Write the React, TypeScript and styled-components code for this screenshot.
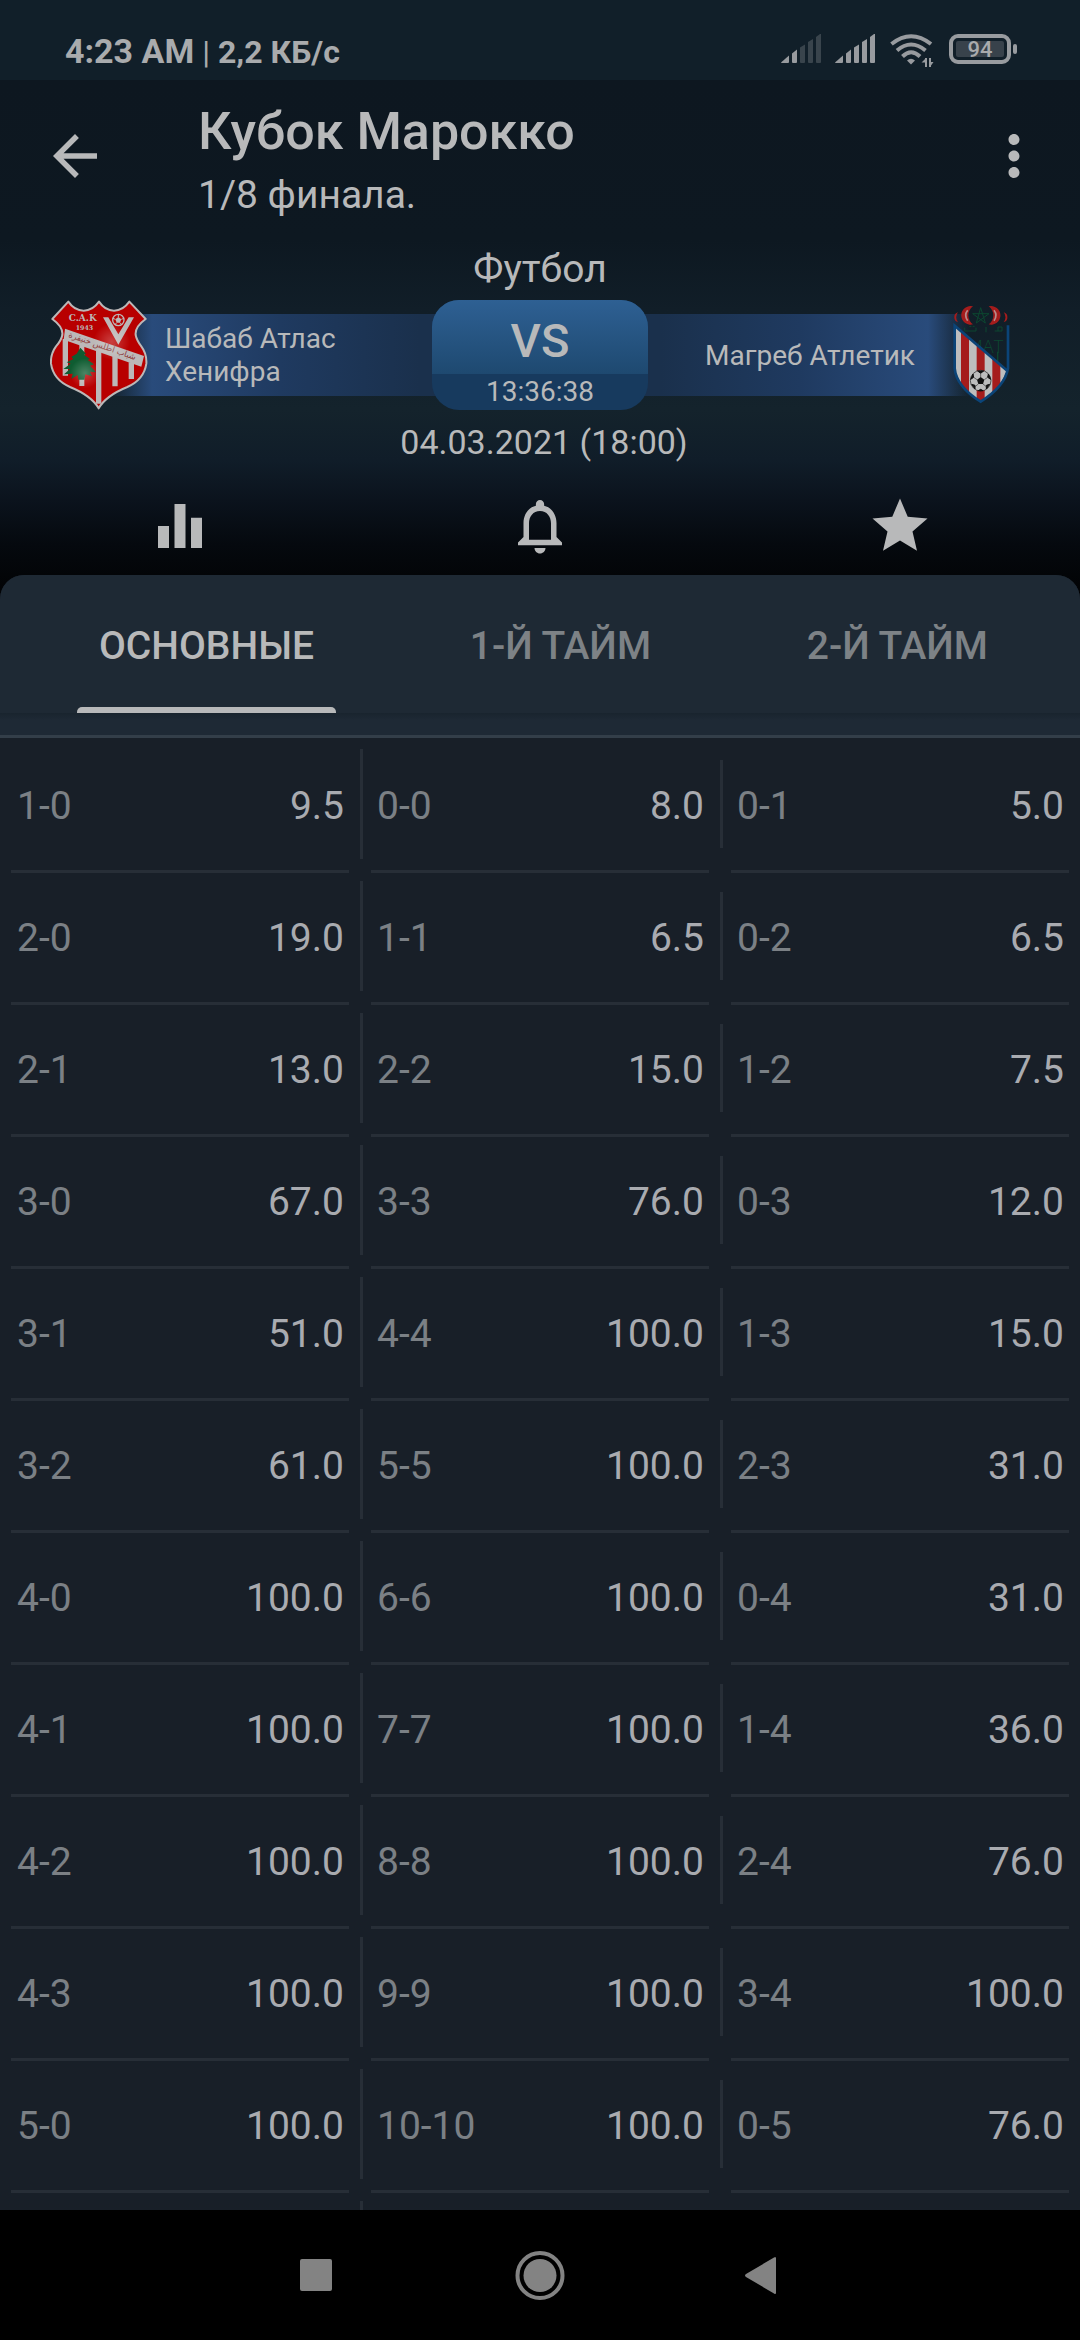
import React, { useState } from "react";
import styled, { createGlobalStyle } from "styled-components";

const GlobalStyle = createGlobalStyle`
  * { box-sizing: border-box; }
  html, body, #root { height: 100%; }
  body {
    margin: 0;
    background: #000;
    color: #b8b9ba;
    font-family: Roboto, "Noto Sans", sans-serif;
  }
  button {
    border: 0;
    padding: 0;
    background: none;
    color: inherit;
    font: inherit;
    cursor: pointer;
  }
`;

const Screen = styled.div`
  display: flex;
  flex-direction: column;
  height: 100vh;
  overflow: hidden;
`;

const Hero = styled.header`
  background: linear-gradient(
    #0d1720 80px,
    #0d1821 240px,
    #111e28 310px,
    #14232c 410px,
    #101d29 460px,
    #0b131d 500px,
    #05090e 545px,
    #020305 590px
  );
  padding-bottom: 40px;
`;

const StatusBar = styled.div`
  display: flex;
  align-items: center;
  height: 80px;
  padding: 22px 63px 0 65px;
  background: #111f29;
  color: #a9abad;
`;

const Clock = styled.div`
  display: flex;
  align-items: baseline;
  gap: 8px;
  flex: 1;
  font-size: 34px;
  line-height: 40px;
  font-weight: 700;
`;

const Speed = styled.span`
  font-size: 32px;
`;

const Bar = styled.span`
  font-size: 32px;
  font-weight: 400;
`;

const Indicators = styled.div`
  display: flex;
  align-items: flex-start;
  gap: 14px;
  height: 34px;
  color: #989b9f;
`;

const Battery = styled.div`
  display: flex;
  align-items: center;
  gap: 2px;
  height: 30px;
  &::after {
    content: "";
    width: 4px;
    height: 10px;
    border-radius: 2px;
    background: currentColor;
  }
`;

const BatteryShell = styled.div`
  width: 62px;
  height: 30px;
  padding: 3px;
  border: 4px solid currentColor;
  border-radius: 9px;
`;

const BatteryLevel = styled.div`
  height: 16px;
  border-radius: 2px;
  background: #38424b;
  color: #a9abad;
  font-size: 22px;
  line-height: 17px;
  font-weight: 500;
  text-align: center;
`;

const AppBar = styled.div`
  display: flex;
  align-items: flex-start;
  gap: 90px;
  padding: 22px 33px 29px 42px;
`;

const IconButton = styled.button`
  display: block;
  height: 66px;
  margin-top: 21px;
  svg { display: block; }
`;

const Titles = styled.div`
  display: flex;
  flex-direction: column;
  gap: 10px;
  flex: 1;
`;

const Title = styled.h1`
  margin: 0;
  font-size: 52px;
  line-height: 60px;
  font-weight: 500;
`;

const Subtitle = styled.p`
  margin: 0;
  font-size: 39px;
  line-height: 46px;
`;

const Sport = styled.div`
  margin-bottom: 9px;
  font-size: 39px;
  line-height: 44px;
  text-align: center;
`;

const Match = styled.div`
  display: grid;
  grid-template-columns: 1fr 216px 1fr;
  height: 110px;
`;

const Team = styled.div<{ $side: "left" | "right" }>`
  display: flex;
  flex-direction: ${(p) => (p.$side === "left" ? "row" : "row-reverse")};
  align-items: center;
  gap: ${(p) => (p.$side === "left" ? 17 : 37)}px;
  padding: ${(p) => (p.$side === "left" ? "0 0 0 50px" : "0 70px 0 0")};
  margin: ${(p) => (p.$side === "left" ? "0 -10px 0 0" : "0 0 0 -10px")};
  background: linear-gradient(
      to ${(p) => (p.$side === "left" ? "right" : "left")},
      transparent 110px,
      #294b7b 152px,
      #1f3a60 280px,
      #1a304c 420px
    )
    center / 100% 82px no-repeat;
  font-size: 28px;
  line-height: 33px;
  svg { flex: none; }
`;

const TeamName = styled.span`
  max-width: 220px;
`;

const Versus = styled.div`
  position: relative;
  z-index: 1;
  display: flex;
  flex-direction: column;
  overflow: hidden;
  border-radius: 27px;
  background: #173a5e;
  text-align: center;
`;

const VersusMark = styled.div`
  height: 77px;
  padding-top: 13px;
  background: linear-gradient(#2e6093, #1e4970);
  font-size: 47px;
  line-height: 56px;
  font-weight: 500;
`;

const Countdown = styled.div`
  font-size: 28px;
  line-height: 36px;
`;

const Kickoff = styled.div`
  margin-top: 12px;
  padding-left: 8px;
  font-size: 34px;
  line-height: 40px;
  text-align: center;
`;

const Actions = styled.div`
  display: grid;
  grid-template-columns: repeat(3, 1fr);
  justify-items: center;
  margin-top: 10px;
`;

const Sheet = styled.main`
  display: flex;
  flex-direction: column;
  flex: 1;
  min-height: 0;
  margin-top: -24px;
  overflow: hidden;
  border-radius: 24px 24px 0 0;
  background: #181f28;
`;

const TabList = styled.div`
  display: flex;
  justify-content: space-between;
  padding: 0 70px 0 77px;
  background: #1e2934;
`;

const Tab = styled.button<{ $active: boolean }>`
  display: flex;
  flex-direction: column;
  height: 138px;
  padding-top: 48px;
  color: ${(p) => (p.$active ? "#b8b9ba" : "#7d8286")};
  font-size: 39px;
  line-height: 46px;
  font-weight: 500;
  span { padding: 0 22px; }
  &::after {
    content: "";
    width: 100%;
    height: 6px;
    margin-top: auto;
    border-radius: 5px 5px 0 0;
    background: ${(p) => (p.$active ? "#b8b9ba" : "transparent")};
  }
`;

const TabShade = styled.div`
  height: 25px;
  flex: none;
  border-bottom: 3px solid #333e49;
  background: linear-gradient(#19242e, #1e2935 7px);
`;

const OddsScroll = styled.div`
  flex: 1;
  min-height: 0;
  padding-top: 3px;
  overflow: hidden;
`;

const OddsTable = styled.table`
  width: 100%;
  table-layout: fixed;
  border-collapse: collapse;
  td { padding: 0; }
`;

const Cell = styled.div`
  display: flex;
  height: 129px;
`;

const Divider = styled.div<{ $column: number }>`
  width: 3px;
  margin: ${(p) => (p.$column === 1 ? "8px 0 11px" : "19px 0 22px")};
  background: ${(p) => (p.$column === 0 ? "transparent" : "#272e37")};
`;

const Odd = styled.button`
  display: flex;
  flex: 1;
  align-items: center;
  justify-content: space-between;
  padding: 0 16px 0 14px;
  font-size: 39px;
  line-height: 46px;
`;

const Score = styled.span`
  color: #7b8085;
`;

const Price = styled.span`
  color: #a9abb0;
`;

const Rule = styled.div`
  height: 3px;
  margin: 0 11px;
  background: #272e37;
`;

const SystemNav = styled.nav`
  display: flex;
  flex: none;
  align-items: center;
  justify-content: center;
  gap: 162px;
  height: 130px;
  background: #000;
  color: #838383;
  svg { display: block; }
`;

const rows: [string, string][][] = [
  [["1-0", "9.5"], ["0-0", "8.0"], ["0-1", "5.0"]],
  [["2-0", "19.0"], ["1-1", "6.5"], ["0-2", "6.5"]],
  [["2-1", "13.0"], ["2-2", "15.0"], ["1-2", "7.5"]],
  [["3-0", "67.0"], ["3-3", "76.0"], ["0-3", "12.0"]],
  [["3-1", "51.0"], ["4-4", "100.0"], ["1-3", "15.0"]],
  [["3-2", "61.0"], ["5-5", "100.0"], ["2-3", "31.0"]],
  [["4-0", "100.0"], ["6-6", "100.0"], ["0-4", "31.0"]],
  [["4-1", "100.0"], ["7-7", "100.0"], ["1-4", "36.0"]],
  [["4-2", "100.0"], ["8-8", "100.0"], ["2-4", "76.0"]],
  [["4-3", "100.0"], ["9-9", "100.0"], ["3-4", "100.0"]],
  [["5-0", "100.0"], ["10-10", "100.0"], ["0-5", "76.0"]],
];

const tabs = ["ОСНОВНЫЕ", "1-Й ТАЙМ", "2-Й ТАЙМ"];

const Glyph = ({ d }: { d: string }) => (
  <svg width="66" height="66" viewBox="0 0 24 24" fill="currentColor" aria-hidden="true">
    <path d={d} />
  </svg>
);

const signalBars = [
  "M0 28.5 L8 21.5 V28 Q8 29 7 29 H0.5 Z",
  "M11 19.5 L16 15.5 V28 Q16 29 15 29 H12 Q11 29 11 28 Z",
  "M19 13.5 L24 10.5 V28 Q24 29 23 29 H20 Q19 29 19 28 Z",
  "M27 8 L32 5 V28 Q32 29 31 29 H28 Q27 29 27 28 Z",
  "M35 3 L39 0 H40 V28 Q40 29 39 29 H36 Q35 29 35 28 Z",
];

const Signal = ({ level }: { level: number }) => (
  <svg width="40" height="30" viewBox="0 0 40 30" fill="currentColor" aria-hidden="true">
    {signalBars.map((d, i) => (
      <path key={d} d={d} opacity={i < level ? 1 : 0.3} />
    ))}
  </svg>
);

const Wifi = () => (
  <svg width="46" height="34" viewBox="-1 0 46 34" fill="none" stroke="currentColor" strokeWidth="4" aria-hidden="true">
    <path d="M1.5 10 Q21 -5.5 41 10" />
    <path d="M7 16.5 Q21 4.5 35.5 16.5" />
    <path d="M12.5 22.5 Q21 14 30 22.5" />
    <path d="M17 26.5 Q21 23 25 26.5 L21 30.5 Z" fill="currentColor" stroke="none" />
    <path d="M36 24 V33 M40 24 V33" strokeWidth="2" />
    <path d="M36 24 L31.5 28.5 H36 Z M40 33 V28 H43.5 Z" fill="currentColor" stroke="none" />
  </svg>
);

const Football = ({ x, y, r }: { x: number; y: number; r: number }) => (
  <g transform={`translate(${x} ${y}) scale(${r / 32})`}>
    <circle r="31" fill="#bdbdbd" stroke="#1a1a1a" strokeWidth="2" />
    <path d="M0 -11 L11 -3 L7 10 H-7 L-11 -3 Z" fill="#111" />
    <path
      d="M-9 -29 H9 L0 -22 Z M23 -20 L30 -4 L21 -10 Z M-23 -20 L-30 -4 L-21 -10 Z M27 11 L17 25 L17 14 Z M-27 11 L-17 25 L-17 14 Z M-7 30 H7 L0 26 Z"
      fill="#111"
      stroke="#111"
      strokeWidth="3"
    />
    <path d="M0 -11 V-22 M11 -3 L21 -10 M7 10 L17 18 M-7 10 L-17 18 M-11 -3 L-21 -10" stroke="#333" strokeWidth="2" />
  </g>
);

const StarBall = ({ x, y }: { x: number; y: number }) => (
  <g transform={`translate(${x} ${y})`}>
    <circle r="17" fill="#b80000" stroke="#bcb8b8" strokeWidth="4" />
    <path d="M0 -9 L9 -2 L5 8 H-5 L-9 -2 Z" fill="#bcb8b8" />
    <path d="M0 -9 V-17 M9 -2 L16 -5 M5 8 L10 14 M-5 8 L-10 14 M-9 -2 L-16 -5" stroke="#bcb8b8" strokeWidth="3" />
  </g>
);

const shield =
  "M85 50 Q103 77 131 77 Q158 77 177 50 Q195 77 222 77 Q249 77 268 50 L317 102 Q284 126 287 150 Q290 166 304 184 Q321 207 319 236 Q312 284 262 306 Q198 332 176 370 Q154 332 90 306 Q40 284 33 236 Q31 207 48 184 Q64 166 67 150 Q70 126 37 102 Z";

const KhenifraCrest = () => (
  <svg width="98" height="110" viewBox="30 45 294 330" role="img" aria-label="Шабаб Атлас Хенифра">
    <defs>
      <clipPath id="cak-shield">
        <path d={shield} />
      </clipPath>
      <radialGradient id="cak-shine">
        <stop offset="0" stopColor="#fff" stopOpacity="0.25" />
        <stop offset="1" stopColor="#fff" stopOpacity="0" />
      </radialGradient>
    </defs>
    <path d={shield} fill="#b80000" />
    <g clipPath="url(#cak-shield)">
      <path
        fill="#bcb8b8"
        d="M68 162 H84 V272 H68 Z M118 180 H133 V303 H118 Z M168 197 H184 V356 H168 Z M217 214 H233 V304 H217 Z M266 232 H282 V282 H266 Z"
      />
      <path fill="#bcb8b8" d="M75 131 L312 213 L304 245 L71 164 Z" />
    </g>
    <text x="84" y="156" transform="rotate(19 84 156)" fontFamily="'DejaVu Sans', sans-serif" fontSize="25" fill="#8d3a3a">
      شباب أطلس خنيفرة
    </text>
    <path
      fill="#0f5c31"
      d="M121 188 L138 206 L132 209 L150 222 L143 225 L162 238 L150 242 L168 262 L150 260 L156 274 L136 268 L133 284 H115 L113 270 L94 282 L98 266 L72 268 L90 252 L70 252 L92 236 L80 232 L100 222 L94 216 L110 206 Z"
    />
    <path fill="#bcb8b8" d="M189 97 H205 L235 148 L266 97 H282 L235 179 Z" />
    <StarBall x={235} y={105} />
    <text x="86" y="109" fontFamily="'DejaVu Serif', serif" fontWeight="700" fontSize="27" fill="#bcb8b8">
      C.A.K
    </text>
    <text x="107" y="136" fontFamily="'DejaVu Serif', serif" fontWeight="700" fontSize="19" fill="#bcb8b8">
      1943
    </text>
    <circle cx="215" cy="170" r="55" fill="url(#cak-shine)" />
    <circle cx="135" cy="265" r="45" fill="url(#cak-shine)" />
    <path d={shield} fill="none" stroke="#bcb8b8" strokeWidth="6" strokeLinejoin="round" />
  </svg>
);

const MoghrebCrest = () => (
  <svg width="58" height="100" viewBox="66 60 174 300" role="img" aria-label="Магреб Атлетик">
    <defs>
      <clipPath id="mat-field">
        <path d="M76 124 L230 258 Q212 312 152 350 Q92 312 78 262 Z" />
      </clipPath>
    </defs>
    <g fill="none" stroke="#0c4630" strokeWidth="3">
      <path d="M152 68 L166 114 L128 86 H177 L139 114 Z" />
      <path d="M104 128 V138 H138 V128 M168 126 V142 M194 138 H216 V126 H204 V138 M118 124 H124 M128 124 H134" />
    </g>
    <text x="112" y="204" fontFamily="'Open Sans', sans-serif" fontWeight="300" fontSize="54" fill="#0c4630">
      MAT
    </text>
    <path d="M203 200 V235" stroke="#0c4630" strokeWidth="4" />
    <path fill="#a51c1c" d="M129 64 A28 28 0 1 0 129 118 A33 33 0 0 1 129 64 Z M176 64 A28 28 0 1 1 176 118 A33 33 0 0 0 176 64 Z" />
    <path fill="#a51c1c" d="M84 82 A15 15 0 0 0 84 111 A22 22 0 0 1 84 82 Z M221 82 A15 15 0 0 1 221 111 A22 22 0 0 0 221 82 Z" />
    <path d="M113 76 Q101 91 113 107 M192 76 Q204 91 192 107" fill="none" stroke="#b98a8a" strokeWidth="5" />
    <g clipPath="url(#mat-field)">
      <path fill="#bdbdbd" d="M70 110 H240 V360 H70 Z" />
      <path fill="#a51c1c" d="M93 110 H117 V360 H93 Z M140 110 H164 V360 H140 Z M187 110 H211 V360 H187 Z" />
    </g>
    <path
      d="M234 121 V250 Q225 304 152 350 Q79 304 74 250 V122 L230 256"
      fill="none"
      stroke="#0b4478"
      strokeWidth="8"
    />
    <Football x={152} y={287} r={32} />
  </svg>
);

export default function App() {
  const [active, setActive] = useState(0);
  return (
    <Screen>
      <GlobalStyle />
      <Hero>
        <StatusBar>
          <Clock>
            <span>4:23 AM</span>
            <Bar>|</Bar>
            <Speed>2,2 КБ/с</Speed>
          </Clock>
          <Indicators>
            <Signal level={2} />
            <Signal level={5} />
            <Wifi />
            <Battery>
              <BatteryShell>
                <BatteryLevel>94</BatteryLevel>
              </BatteryShell>
            </Battery>
          </Indicators>
        </StatusBar>
        <AppBar>
          <IconButton aria-label="Назад">
            <Glyph d="M20 11H7.83l5.59-5.59L12 4l-8 8 8 8 1.41-1.41L7.83 13H20v-2z" />
          </IconButton>
          <Titles>
            <Title>Кубок Марокко</Title>
            <Subtitle>1/8 финала.</Subtitle>
          </Titles>
          <IconButton aria-label="Меню">
            <Glyph d="M12 8c1.1 0 2-.9 2-2s-.9-2-2-2-2 .9-2 2 .9 2 2 2zm0 2c-1.1 0-2 .9-2 2s.9 2 2 2 2-.9 2-2-.9-2-2-2zm0 6c-1.1 0-2 .9-2 2s.9 2 2 2 2-.9 2-2-.9-2-2-2z" />
          </IconButton>
        </AppBar>
        <Sport>Футбол</Sport>
        <Match>
          <Team $side="left">
            <KhenifraCrest />
            <TeamName>Шабаб Атлас Хенифра</TeamName>
          </Team>
          <Versus>
            <VersusMark>VS</VersusMark>
            <Countdown>13:36:38</Countdown>
          </Versus>
          <Team $side="right">
            <MoghrebCrest />
            <TeamName>Магреб Атлетик</TeamName>
          </Team>
        </Match>
        <Kickoff>04.03.2021 (18:00)</Kickoff>
        <Actions>
          <IconButton aria-label="Статистика">
            <Glyph d="M10 20h4V4h-4v16zm-6 0h4v-8H4v8zM16 9v11h4V9h-4z" />
          </IconButton>
          <IconButton aria-label="Уведомления">
            <Glyph d="M12 22c1.1 0 2-.9 2-2h-4c0 1.1.9 2 2 2zm6-6v-5c0-3.07-1.63-5.64-4.5-6.32V4c0-.83-.67-1.5-1.5-1.5s-1.5.67-1.5 1.5v.68C7.64 5.36 6 7.92 6 11v5l-2 2v1h16v-1l-2-2zm-2 1H8v-6c0-2.48 1.51-4.5 4-4.5s4 2.02 4 4.5v6z" />
          </IconButton>
          <IconButton aria-label="Избранное">
            <Glyph d="M12 17.27L18.18 21l-1.64-7.03L22 9.24l-7.19-.61L12 2 9.19 8.63 2 9.24l5.46 4.73L5.82 21z" />
          </IconButton>
        </Actions>
      </Hero>
      <Sheet>
        <TabList role="tablist">
          {tabs.map((name, i) => (
            <Tab key={name} role="tab" aria-selected={i === active} $active={i === active} onClick={() => setActive(i)}>
              <span>{name}</span>
            </Tab>
          ))}
        </TabList>
        <TabShade />
        <OddsScroll>
          <OddsTable>
            <tbody>
              {rows.map((row, r) => (
                <tr key={r}>
                  {row.map(([score, price], c) => (
                    <td key={score}>
                      <Cell>
                        <Divider $column={c} />
                        <Odd>
                          <Score>{score}</Score>
                          <Price>{price}</Price>
                        </Odd>
                      </Cell>
                      <Rule />
                    </td>
                  ))}
                </tr>
              ))}
              <tr>
                {[0, 1, 2].map((c) => (
                  <td key={c}>
                    <Cell>
                      <Divider $column={c} />
                    </Cell>
                  </td>
                ))}
              </tr>
            </tbody>
          </OddsTable>
        </OddsScroll>
      </Sheet>
      <SystemNav>
        <button aria-label="Недавние">
          <svg width="60" height="60" viewBox="0 0 60 60" fill="currentColor">
            <rect x="12" y="14" width="32" height="32" rx="2" />
          </svg>
        </button>
        <button aria-label="Домой">
          <svg width="60" height="60" viewBox="0 0 60 60" fill="currentColor">
            <circle cx="30" cy="30.5" r="22.5" fill="none" stroke="currentColor" strokeWidth="4" />
            <circle cx="30" cy="30.5" r="16.5" />
          </svg>
        </button>
        <button aria-label="Назад в системе">
          <svg width="60" height="60" viewBox="0 0 60 60" fill="currentColor">
            <path d="M42 12.5 Q44 11 44 13.5 V47.5 Q44 50 42 48.5 L14 32 Q12 30.5 14 29 Z" />
          </svg>
        </button>
      </SystemNav>
    </Screen>
  );
}
